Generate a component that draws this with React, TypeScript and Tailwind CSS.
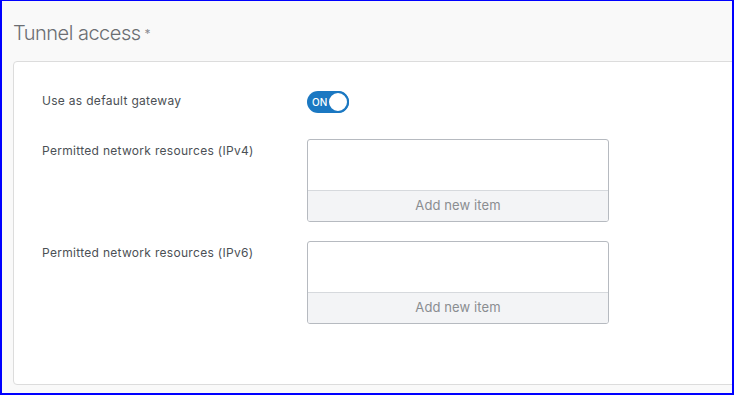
import React from "react";

function ListBox() {
  return (
    <div className="w-[302px] h-[83px] border border-[#b6bac0] rounded-[3px] flex flex-col overflow-hidden bg-white">
      <div className="h-[51px] border-b border-[#d6d9dd] shrink-0"></div>
      <div className="flex-1 bg-[#f3f4f6] flex items-center justify-center text-[13px] text-[#8a8d91] tracking-[0.1px]">
        Add new item
      </div>
    </div>
  );
}

export default function App() {
  return (
    <div
      className="w-[734px] h-[395px] bg-[#f9f9f9] border-2 border-t border-[#0000ff] overflow-hidden flex flex-col"
      style={{ fontFamily: "Inter, 'Noto Sans', sans-serif" }}
    >
      <div className="h-[60px] pl-[11px] flex items-center pt-[3px]">
        <span className="text-[20px] font-light text-[#6b6e72] tracking-[-0.5px]">Tunnel access</span>
        <span className="text-[12px] text-[#8a8d91] ml-[4px] mt-[3px]">*</span>
      </div>
      <div className="ml-[11px] mr-[-10px] h-[324px] bg-white border border-[#dcdcdc] rounded-b-[4px] rounded-tl-[4px] pl-[28px] pt-[29px] flex flex-col">
        <div className="flex items-center h-[22px]">
          <div className="w-[265px] text-[12px] text-[#4b5055] -mt-[3px] tracking-[0.3px]">Use as default gateway</div>
          <div className="w-[42px] h-[22px] rounded-full bg-[#1b78c2] relative flex items-center">
            <span className="text-[10px] text-white ml-[5px] font-medium">ON</span>
            <div className="absolute right-[0px] top-[0px] w-[22px] h-[22px] rounded-full bg-white border-2 border-[#1b78c2]"></div>
          </div>
        </div>
        <div className="flex mt-[26px]">
          <div className="w-[265px] text-[12px] text-[#4b5055] pt-[4px] leading-[16px] tracking-[0.3px]">Permitted network resources (IPv4)</div>
          <ListBox />
        </div>
        <div className="flex mt-[19px]">
          <div className="w-[265px] text-[12px] text-[#4b5055] pt-[4px] leading-[16px] tracking-[0.3px]">Permitted network resources (IPv6)</div>
          <ListBox />
        </div>
      </div>
    </div>
  );
}
